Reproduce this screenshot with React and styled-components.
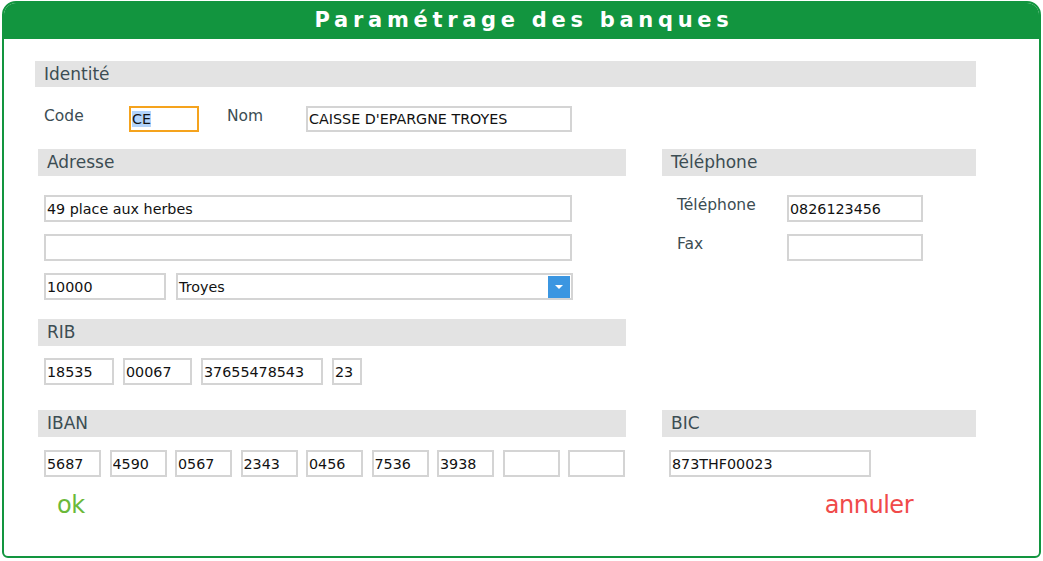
import React from "react";
import styled, { createGlobalStyle } from "styled-components";

const Global = createGlobalStyle`
  html, body { margin: 0; padding: 0; background: #ffffff; }
  body { font-family: "DejaVu Sans", Verdana, sans-serif; }
  * { box-sizing: border-box; }
`;

const Page = styled.div`
  padding: 1px 0 0 2px;
`;

const Window = styled.div`
  width: 1039px;
  height: 557px;
  border: 2px solid #12953f;
  border-radius: 14px 14px 6px 6px;
  overflow: hidden;
  display: flex;
  flex-direction: column;
  background: #fff;
`;

const TitleBar = styled.div`
  height: 36px;
  background: #12953f;
  display: flex;
  align-items: center;
  justify-content: center;
  flex-shrink: 0;
  padding-bottom: 3px;
`;

const Title = styled.h1`
  margin: 0;
  color: #ffffff;
  font-family: "DejaVu Sans", Verdana, sans-serif;
  font-weight: bold;
  font-size: 21px;
  line-height: 24px;
  letter-spacing: 4.7px;
  padding-left: 5px;
`;

const Body = styled.div`
  padding: 22px 0 0 31px;
  display: flex;
  flex-direction: column;
`;

const Section = styled.section`
  display: flex;
  flex-direction: column;
  width: ${(p) => (p.$width ? `${p.$width}px` : "auto")};
`;

const SectionBar = styled.div`
  height: ${(p) => p.$h || 27}px;
  background: #e3e3e3;
  color: #3c4d53;
  font-size: 17px;
  line-height: ${(p) => p.$h || 27}px;
  padding-left: 9px;
  white-space: nowrap;
`;

const Row = styled.div`
  display: flex;
  align-items: flex-start;
  margin-top: ${(p) => p.$mt || 0}px;
  padding-left: ${(p) => p.$pl || 0}px;
  gap: ${(p) => p.$gap || 0}px;
`;

const Label = styled.span`
  width: ${(p) => p.$w}px;
  padding-left: ${(p) => p.$pl || 0}px;
  color: #3c4d53;
  font-size: 15.5px;
  line-height: 18px;
  padding-top: 1px;
  flex-shrink: 0;
  white-space: nowrap;
`;

const Field = styled.input`
  width: ${(p) => p.$w}px;
  height: ${(p) => p.$h || 27}px;
  border: 2px solid #d4d4d4;
  padding: 0 1px;
  margin: 0;
  font-family: "DejaVu Sans", Verdana, sans-serif;
  font-size: 14.3px;
  color: #111;
  background: #fff;
  outline: none;
  flex-shrink: 0;
`;

const FocusField = styled.div`
  width: ${(p) => p.$w}px;
  height: 26px;
  border: 2px solid #f5a31d;
  padding: 0 1px;
  font-size: 14.3px;
  line-height: 22px;
  color: #111;
  flex-shrink: 0;
`;

const Selected = styled.span`
  background: #b3d4fb;
`;

const Select = styled.div`
  width: ${(p) => p.$w}px;
  height: 27px;
  border: 2px solid #d4d4d4;
  padding: 0 1px 0 1px;
  display: flex;
  align-items: center;
  justify-content: space-between;
  font-size: 14.3px;
  color: #111;
  flex-shrink: 0;
`;

const SelectButton = styled.span`
  width: 22px;
  height: 22px;
  background: #3b96e1;
  display: flex;
  align-items: center;
  justify-content: center;
`;

const Stack = styled.div`
  display: flex;
  flex-direction: column;
  gap: ${(p) => p.$gap || 12}px;
  margin-top: ${(p) => p.$mt || 0}px;
  padding-left: ${(p) => p.$pl || 0}px;
`;

const Columns = styled.div`
  display: grid;
  grid-template-columns: 588px 314px;
  column-gap: 36px;
  margin-left: 3px;
  margin-top: ${(p) => p.$mt || 0}px;
  align-items: start;
`;

const Actions = styled.div`
  display: flex;
  justify-content: space-between;
  width: 878px;
  padding-left: 22px;
  margin-top: 15px;
`;

const ActionButton = styled.button`
  background: none;
  border: none;
  padding: 0;
  font-family: "DejaVu Sans", sans-serif;
  font-size: 24px;
  line-height: 26px;
  letter-spacing: -0.5px;
  color: ${(p) => p.$color};
  cursor: pointer;
`;

const Ribs = [
  { v: "18535", w: 70 },
  { v: "00067", w: 69 },
  { v: "37655478543", w: 122 },
  { v: "23", w: 30 },
];

const Ibans = ["5687", "4590", "0567", "2343", "0456", "7536", "3938", "", ""];

export default function App() {
  return (
    <Page>
      <Global />
      <Window>
        <TitleBar>
          <Title>Paramétrage des banques</Title>
        </TitleBar>
        <Body>
          <Section $width={941}>
            <SectionBar $h={26}>Identité</SectionBar>
            <Row $mt={19} $pl={9}>
              <Label $w={85}>Code</Label>
              <FocusField $w={70}>
                <Selected>CE</Selected>
              </FocusField>
              <Label $w={107} $pl={28}>Nom</Label>
              <Field $w={266} $h={26} readOnly value="CAISSE D'EPARGNE TROYES" />
            </Row>
          </Section>

          <Columns $mt={17}>
            <div>
              <Section>
                <SectionBar>Adresse</SectionBar>
                <Stack $mt={19} $pl={6}>
                  <Field $w={528} readOnly value="49 place aux herbes" />
                  <Field $w={528} readOnly value="" />
                  <Row $gap={10}>
                    <Field $w={122} readOnly value="10000" />
                    <Select $w={397}>
                      <span>Troyes</span>
                      <SelectButton>
                        <svg width="10" height="6" viewBox="0 0 10 6">
                          <path d="M1 1 L5 5 L9 1 Z" fill="#fff" />
                        </svg>
                      </SelectButton>
                    </Select>
                  </Row>
                </Stack>
              </Section>
              <Section style={{ marginTop: 19 }}>
                <SectionBar>RIB</SectionBar>
                <Row $mt={12} $pl={6} $gap={9}>
                  {Ribs.map((r, i) => (
                    <Field key={i} $w={r.w} readOnly value={r.v} />
                  ))}
                </Row>
              </Section>
            </div>
            <Section>
              <SectionBar>Téléphone</SectionBar>
              <Stack $mt={19} $pl={15}>
                <Row>
                  <Label $w={110}>Téléphone</Label>
                  <Field $w={136} readOnly value="0826123456" />
                </Row>
                <Row>
                  <Label $w={110}>Fax</Label>
                  <Field $w={136} readOnly value="" />
                </Row>
              </Stack>
            </Section>
          </Columns>

          <Columns $mt={25}>
            <Section>
              <SectionBar>IBAN</SectionBar>
              <Row $mt={13} $pl={6} $gap={8.5}>
                {Ibans.map((v, i) => (
                  <Field key={i} $w={57} readOnly value={v} />
                ))}
              </Row>
            </Section>
            <Section>
              <SectionBar>BIC</SectionBar>
              <Row $mt={13} $pl={7}>
                <Field $w={202} readOnly value="873THF00023" />
              </Row>
            </Section>
          </Columns>

          <Actions>
            <ActionButton $color="#6bb93a">ok</ActionButton>
            <ActionButton $color="#f04a4a">annuler</ActionButton>
          </Actions>
        </Body>
      </Window>
    </Page>
  );
}
